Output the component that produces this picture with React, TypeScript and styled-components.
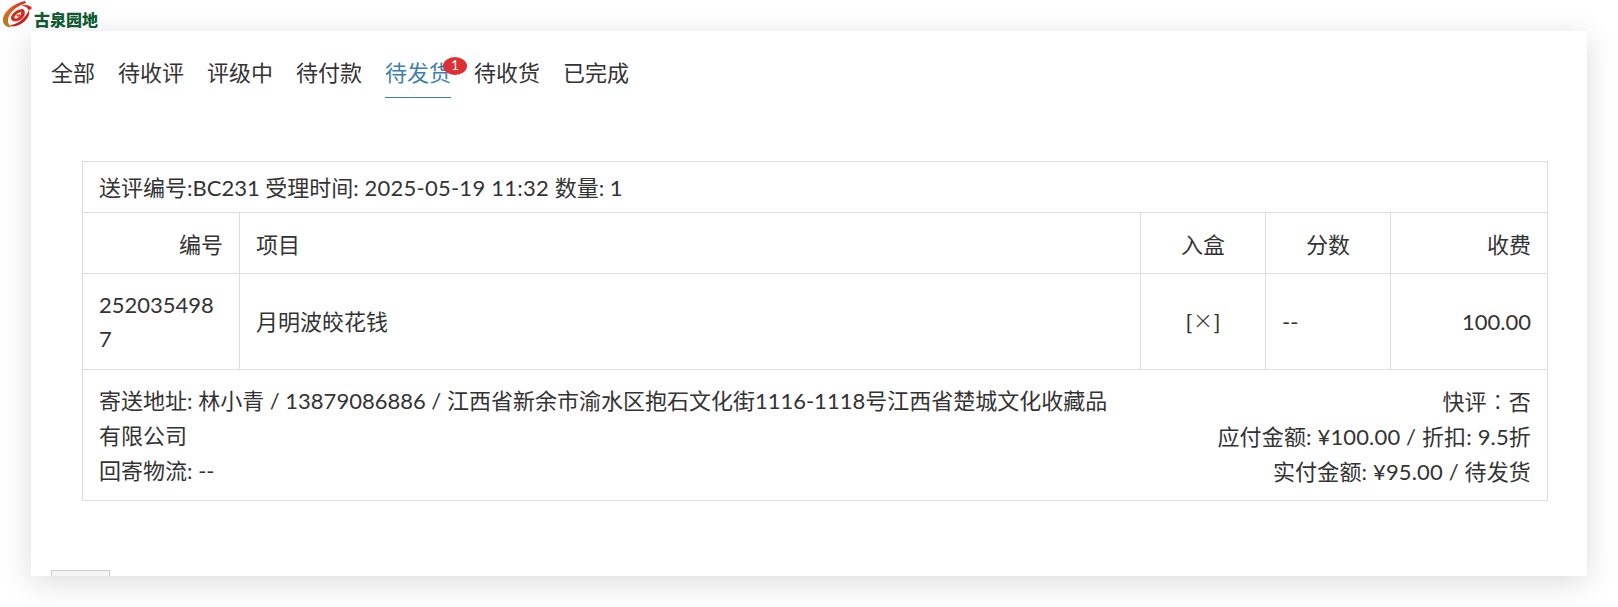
import React, { FC } from 'react';
import styled, { createGlobalStyle } from 'styled-components';

const GlobalStyle = createGlobalStyle`
  html, body {
    margin: 0;
    padding: 0;
    height: 607px;
    overflow: hidden;
    background: #fff;
    color: #333;
    font-family: Lato, "Noto Sans CJK SC", sans-serif;
    font-size: 22px;
  }
`;

const Page = styled.div`
  width: 1618px;
  height: 607px;
  overflow: hidden;
  display: flex;
  flex-direction: column;
`;

const Header = styled.header`
  height: 31px;
  flex: none;
  display: flex;
  align-items: flex-start;
  padding: 1px 0 0 2px;
  box-sizing: border-box;
  position: relative;
  z-index: 1;
`;

const LogoName = styled.span`
  margin: 8px 0 0 1px;
  font-family: "Noto Sans CJK SC", sans-serif;
  font-size: 16px;
  line-height: 20px;
  font-weight: 900;
  color: #0f5a32;
`;

const Card = styled.main`
  flex: none;
  margin: 0 31px;
  height: 545px;
  background: #fff;
  overflow: hidden;
  box-shadow: 0 6px 30px rgba(0, 0, 0, 0.14);
  padding: 0 39px 0 20px;
  box-sizing: border-box;
`;

const Tabs = styled.nav`
  display: flex;
  gap: 23px;
  padding-top: 12px;
  height: 118px;
  box-sizing: border-box;
`;

const Tab = styled.a<{ $active?: boolean }>`
  position: relative;
  height: 54px;
  line-height: 60px;
  font-size: 22px;
  white-space: nowrap;
  color: ${(p) => (p.$active ? '#3d7fb0' : '#333')};
  border-bottom: 1px solid ${(p) => (p.$active ? '#3d7fb0' : 'transparent')};
`;

const Badge = styled.span`
  position: absolute;
  top: 14px;
  right: -16px;
  width: 24px;
  height: 18px;
  border-radius: 50%;
  background: #dc3035;
  color: #fff;
  font-size: 13px;
  line-height: 17px;
  text-align: center;
`;

const OrderTable = styled.table`
  width: 1466px;
  margin: 12px 0 0 31px;
  border-collapse: collapse;
  table-layout: fixed;
  font-size: 22px;
`;

const Cell = styled.td<{ $align?: string }>`
  border: 1px solid #ddd;
  padding: 0 16px;
  text-align: ${(p) => p.$align || 'left'};
  line-height: 34px;
  word-break: break-all;
`;

const SummaryRow = styled.tr`
  height: 51px;

  td {
    padding-top: 2px;
  }
`;

const HeadRow = styled.tr`
  height: 61px;

  td {
    padding-top: 3px;
  }
`;

const BodyRow = styled.tr`
  height: 96px;
`;

const FooterRow = styled.tr`
  height: 131px;

  td {
    padding-top: 2px;
  }
`;

const Footer = styled.div`
  display: flex;
  justify-content: space-between;
  line-height: 35px;
`;

const Address = styled.div`
  width: 1015px;
`;

const Totals = styled.div`
  text-align: right;
  white-space: nowrap;
  letter-spacing: 0.15px;
`;

const DateText = styled.span`
  letter-spacing: 0.25px;
`;

const WideMark = styled.span`
  font-family: "Noto Sans CJK TC", sans-serif;
  font-weight: 300;
`;

const BoxMark = styled.span`
  display: inline-block;
  padding: 0 2px;
  font-size: 30px;
  line-height: 20px;
  font-weight: 300;
  vertical-align: -1px;
`;

const PageButton = styled.div`
  width: 59px;
  height: 30px;
  margin: 69px 0 0 0;
  background: #f5f5f5;
  border: 1px solid #ccc;
  box-sizing: border-box;
`;

const TABS = ['全部', '待收评', '评级中', '待付款', '待发货', '待收货', '已完成'];

const LogoMark: FC = () => (
  <svg width="31" height="27" viewBox="0 0 31 27">
    <defs>
      <linearGradient id="sweep" x1="0.9" y1="0" x2="0.1" y2="1">
        <stop offset="0" stopColor="#e0261c" />
        <stop offset="0.55" stopColor="#e0631c" />
        <stop offset="1" stopColor="#a8822a" />
      </linearGradient>
    </defs>
    <path d="M23 0 C13 2 3 9 1 17 C0 23 4 27 10 26 C6 24 5 20 7 15 C10 9 17 4 24 2Z" fill="url(#sweep)" />
    <path d="M30 7 C28 4 23 3 19 5 C23 5 26 6 26 9 C28 9 29 8 30 7Z" fill="#e2231a" />
    <path d="M27 9 C29 15 22 23 14 25 C11 26 9 25 8 24 C14 24 23 18 27 9Z" fill="#c9201b" />
    <path d="M21 8 C15 8 9 13 9 17 C9 21 14 21 18 19 C22 17 25 11 21 8Z M19 11 C20 13 17 17 14 17.5 C11 18 12 13 19 11Z" fill="#d7281f" />
    <ellipse cx="16.5" cy="14.5" rx="2.2" ry="1.2" fill="#e2561e" />
  </svg>
);

const App: FC = () => (
  <Page>
    <GlobalStyle />
    <Header>
      <LogoMark />
      <LogoName>古泉园地</LogoName>
    </Header>
    <Card>
      <Tabs>
        {TABS.map((name) => (
          <Tab key={name} $active={name === '待发货'}>
            {name}
            {name === '待发货' && <Badge>1</Badge>}
          </Tab>
        ))}
      </Tabs>
      <OrderTable>
        <colgroup>
          <col style={{ width: 157 }} />
          <col />
          <col style={{ width: 125 }} />
          <col style={{ width: 125 }} />
          <col style={{ width: 157 }} />
        </colgroup>
        <tbody>
          <SummaryRow>
            <Cell colSpan={5}>
              送评编号:BC231 受理时间: <DateText>2025-05-19 11:32</DateText> 数量: 1
            </Cell>
          </SummaryRow>
          <HeadRow>
            <Cell $align="right">编号</Cell>
            <Cell>项目</Cell>
            <Cell $align="center">入盒</Cell>
            <Cell $align="center">分数</Cell>
            <Cell $align="right">收费</Cell>
          </HeadRow>
          <BodyRow>
            <Cell>2520354987</Cell>
            <Cell>月明波皎花钱</Cell>
            <Cell $align="center">
              [<BoxMark>×</BoxMark>]
            </Cell>
            <Cell>--</Cell>
            <Cell $align="right">100.00</Cell>
          </BodyRow>
          <FooterRow>
            <Cell colSpan={5}>
              <Footer>
                <Address>
                  寄送地址: 林小青 / 13879086886 / 江西省新余市渝水区抱石文化街1116-1118号江西省楚城文化收藏品有限公司
                  <br />
                  回寄物流: --
                </Address>
                <Totals>
                  快评<WideMark>：</WideMark>否
                  <br />
                  应付金额: ¥100.00 / 折扣: 9.5折
                  <br />
                  实付金额: ¥95.00 / 待发货
                </Totals>
              </Footer>
            </Cell>
          </FooterRow>
        </tbody>
      </OrderTable>
      <PageButton />
    </Card>
  </Page>
);

export default App;
